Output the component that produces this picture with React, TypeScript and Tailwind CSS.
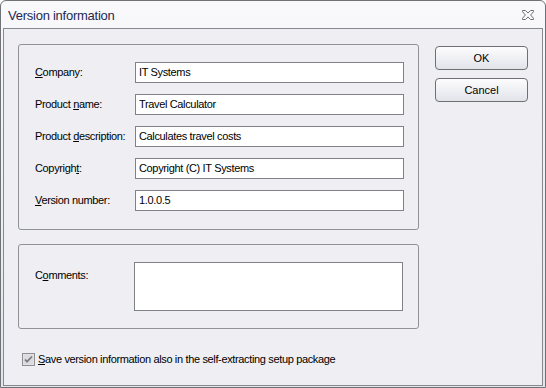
import React from 'react';

const font = { fontFamily: '"Liberation Sans", Arial, sans-serif' };

function Field({ accel, rest, pre = '', value }: { accel: string; rest: string; pre?: string; value: string }) {
    return (
        <div className="flex items-center h-[21px]">
            <span className="w-[100px] text-[11px] tracking-[-0.35px] text-black">
                {pre}
                <u className="underline-offset-[1px]">{accel}</u>
                {rest}
            </span>
            <div className="w-[269px] h-[21px] border border-[#7f8388] bg-white flex items-center px-[3px] text-[11px] tracking-[-0.35px] text-black">
                {value}
            </div>
        </div>
    );
}

function CloseIcon() {
    return (
        <svg width="14" height="12" viewBox="0 0 14 12">
            <path
                d="M1.5 1.5h3l2.5 2.6 2.5-2.6h3v1.2L9.6 6l2.9 3.3v1.2h-3L7 7.9l-2.5 2.6h-3V9.3L4.4 6 1.5 2.7z"
                fill="#fbfbfc"
                stroke="#6d7076"
                strokeWidth="1"
            />
        </svg>
    );
}

function CheckBox() {
    return (
        <svg width="13" height="13" viewBox="0 0 13 13">
            <rect x="0.5" y="0.5" width="12" height="12" fill="#e9e9ec" stroke="#8e8f93" />
            <rect x="1.5" y="1.5" width="10" height="10" fill="#dcdce0" />
            <path d="M3 6.5l2 2.2L10 3.5" fill="none" stroke="#7b7c80" strokeWidth="1.8" />
        </svg>
    );
}

export default function App() {
    return (
        <div className="w-[546px] h-[388px] bg-white" style={font}>
            <div className="w-full h-full border border-[#6f7378] rounded-t-[6px] bg-gradient-to-b from-[#f9f9fb] to-[#e3e5ea] flex flex-col px-[2px] pb-[1px]">
                {/* Title bar */}
                <div className="h-[27px] flex items-center justify-between pl-[5px] pr-[8px] shrink-0">
                    <span className="text-[13px] tracking-[-0.25px] text-[#1d2a55] pt-[3px]">Version information</span>
                    <CloseIcon />
                </div>

                {/* Client area */}
                <div className="flex-1 border border-[#868a8f] bg-[#eeeef3] flex flex-col pl-[14px] pr-[14px] pt-[15px]">
                    <div className="flex">
                        <div className="flex flex-col gap-[14px]">
                            <div className="w-[401px] h-[186px] border border-[#8f9397] rounded-[3px] pl-[16px] pt-[17px] flex flex-col gap-[11px]">
                                <Field accel="C" rest="ompany:" value="IT Systems" />
                                <Field pre="Product " accel="n" rest="ame:" value="Travel Calculator" />
                                <Field pre="Product " accel="d" rest="escription:" value="Calculates travel costs" />
                                <Field pre="Copyrigh" accel="t" rest=":" value="Copyright (C) IT Systems" />
                                <Field accel="V" rest="ersion number:" value="1.0.0.5" />
                            </div>
                            <div className="w-[401px] h-[85px] border border-[#8f9397] rounded-[3px] pl-[16px] pt-[17px] flex">
                                <span className="w-[99px] text-[11px] tracking-[-0.35px] text-black pt-[5px]">
                                    C<u className="underline-offset-[1px]">o</u>mments:
                                </span>
                                <div className="w-[269px] h-[49px] border border-[#7f8388] bg-white" />
                            </div>
                        </div>

                        <div className="ml-[16px] flex flex-col gap-[8px] pt-[2px]">
                            <button className="w-[93px] h-[24px] rounded-[4px] border border-[#6e7074] bg-gradient-to-b from-[#fdfdfe] to-[#e2e3ea] text-[11px] text-black">
                                OK
                            </button>
                            <button className="w-[93px] h-[24px] rounded-[4px] border border-[#6e7074] bg-gradient-to-b from-[#fdfdfe] to-[#e2e3ea] text-[11px] text-black">
                                Cancel
                            </button>
                        </div>
                    </div>

                    <div className="flex items-center mt-[22px] pl-[4px] gap-[3px]">
                        <CheckBox />
                        <span className="text-[11px] tracking-[-0.35px] text-black">
                            <u className="underline-offset-[1px]">S</u>ave version information also in the self-extracting setup package
                        </span>
                    </div>
                </div>
            </div>
        </div>
    );
}
